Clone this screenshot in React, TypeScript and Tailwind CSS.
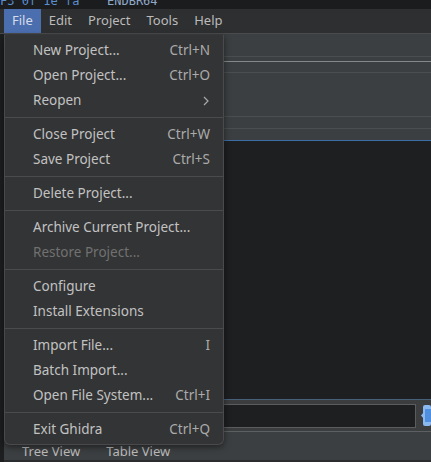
import { Fragment } from 'react';

type MenuEntry =
  | { kind: 'item'; label: string; shortcut?: string; submenu?: boolean; disabled?: boolean }
  | { kind: 'sep' };

const fileMenu: MenuEntry[] = [
  { kind: 'item', label: 'New Project...', shortcut: 'Ctrl+N' },
  { kind: 'item', label: 'Open Project...', shortcut: 'Ctrl+O' },
  { kind: 'item', label: 'Reopen', submenu: true },
  { kind: 'sep' },
  { kind: 'item', label: 'Close Project', shortcut: 'Ctrl+W' },
  { kind: 'item', label: 'Save Project', shortcut: 'Ctrl+S' },
  { kind: 'sep' },
  { kind: 'item', label: 'Delete Project...' },
  { kind: 'sep' },
  { kind: 'item', label: 'Archive Current Project...' },
  { kind: 'item', label: 'Restore Project...', disabled: true },
  { kind: 'sep' },
  { kind: 'item', label: 'Configure' },
  { kind: 'item', label: 'Install Extensions' },
  { kind: 'sep' },
  { kind: 'item', label: 'Import File...', shortcut: 'I' },
  { kind: 'item', label: 'Batch Import...' },
  { kind: 'item', label: 'Open File System...', shortcut: 'Ctrl+I' },
  { kind: 'sep' },
  { kind: 'item', label: 'Exit Ghidra', shortcut: 'Ctrl+Q' },
];

const menuBar = ['File', 'Edit', 'Project', 'Tools', 'Help'];

export default function App() {
  return (
    <div className="relative flex h-[462px] w-[431px] flex-col overflow-hidden bg-[#1e1f21] font-['Noto_Sans',sans-serif] text-[13px] text-[#bbbbbb]">
      {/* listing line cut off at the top */}
      <div className="h-[9px] overflow-hidden bg-[#1b1c1e]">
        <div className="-mt-[7px] flex font-['DejaVu_Sans_Mono',monospace] text-[12px] leading-[16px]">
          <span className="w-[107px] text-[#5a8fd0]">F3 0f 1e fa</span>
          <span className="text-[#8fa8c8]">ENDBR64</span>
        </div>
      </div>

      {/* menu bar */}
      <div className="flex h-[25px] items-stretch bg-[#2e2f30] pl-[4px]">
        {menuBar.map((name, i) => (
          <div
            key={name}
            className={
              i === 0
                ? 'flex items-center bg-[#4b6eaf] px-[8px] text-[#d6dce8]'
                : 'flex items-center px-[8px]'
            }
          >
            {name}
          </div>
        ))}
      </div>
      <div className="h-px bg-[#4a4b4d]" />

      <div className="flex flex-1">
        {/* listing strip on the left */}
        <div className="w-[4px] bg-[#1d1e20]" />

        <div className="flex flex-1 flex-col">
          <div className="flex flex-col bg-[#3c3f41]">
            <div className="h-[22px]" />
            <div className="h-px bg-[#4b4e50]" />
            <div className="h-[4px]" />
            <div className="h-px bg-[#85888a]" />
            <div className="h-[10px]" />
            <div className="h-px bg-[#4b4e50]" />
            <div className="h-[43px]" />
            <div className="h-px bg-[#4b4e50]" />
            <div className="h-[11px]" />
            <div className="h-px bg-[#4b4e50]" />
            <div className="h-[11px]" />
            <div className="h-px bg-[#3a6ea5]" />
          </div>

          <div className="h-[258px] bg-[#1e1f21]" />
          <div className="h-px bg-[#46607a]" />

          <div className="flex h-[31px] items-start bg-[#3b3d3f] pt-[4px]">
            <div className="h-[24px] flex-1 border border-[#5a5c5e] bg-[#1e1f21]" />
            <div className="ml-[5px] mt-[1px] flex w-[10px]">
              <svg width="10" height="21" viewBox="0 0 10 21">
                <rect x="2" y="0" width="8" height="21" rx="2" fill="#8cb8f0" />
                <rect x="4" y="4" width="6" height="13" fill="#4f8fe0" />
                <path d="M0 10.5 L3 7 L3 14 Z" fill="#8cb8f0" />
              </svg>
            </div>
          </div>
          <div className="h-px bg-[#5d6062]" />

          <div className="flex flex-1 items-start gap-[26px] bg-[#3c3f41] pl-[18px] pt-[10px] leading-[18px]">
            <span>Tree View</span>
            <span>Table View</span>
          </div>
          <div className="h-[2px] bg-[#2b2c2e]" />
        </div>
      </div>

      {/* File dropdown */}
      <div className="absolute left-[4px] top-[35px] w-[220px] rounded-b-[6px] border-x border-b border-[#4a4a4c] bg-[#333435] pb-[2px] pt-[3px] text-[13.5px] shadow-[0_2px_6px_rgba(0,0,0,0.5)]">
        {fileMenu.map((entry, i) => (
          <Fragment key={i}>
            {entry.kind === 'sep' ? (
              <div className="my-[4px] h-px bg-[#4a4b4d]" />
            ) : (
              <div
                className={
                  entry.disabled
                    ? 'flex h-[25px] items-center pl-[28px] pr-[13px] text-[#717171]'
                    : 'flex h-[25px] items-center pl-[28px] pr-[13px] text-[#c2c2c2]'
                }
              >
                <span className="flex-1">{entry.label}</span>
                {entry.shortcut && <span className="text-[#ababab]">{entry.shortcut}</span>}
                {entry.submenu && (
                  <svg width="6" height="10" viewBox="0 0 6 10" className="mr-[1px]">
                    <path d="M1 1 L5 5 L1 9" fill="none" stroke="#a9a9a9" strokeWidth="1.2" />
                  </svg>
                )}
              </div>
            )}
          </Fragment>
        ))}
      </div>
    </div>
  );
}
